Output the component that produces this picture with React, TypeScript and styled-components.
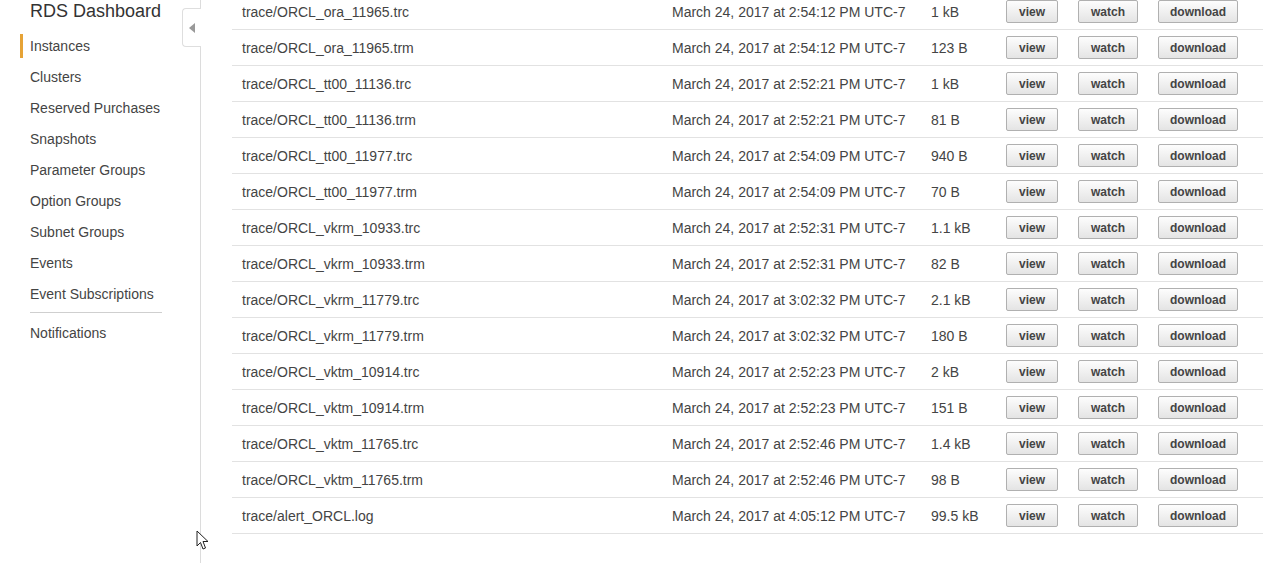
import styled, { createGlobalStyle } from "styled-components"

type LogFile = {
  name: string
  date: string
  size: string
}

const files: LogFile[] = [
  { name: "trace/ORCL_ora_11965.trc", date: "March 24, 2017 at 2:54:12 PM UTC-7", size: "1 kB" },
  { name: "trace/ORCL_ora_11965.trm", date: "March 24, 2017 at 2:54:12 PM UTC-7", size: "123 B" },
  { name: "trace/ORCL_tt00_11136.trc", date: "March 24, 2017 at 2:52:21 PM UTC-7", size: "1 kB" },
  { name: "trace/ORCL_tt00_11136.trm", date: "March 24, 2017 at 2:52:21 PM UTC-7", size: "81 B" },
  { name: "trace/ORCL_tt00_11977.trc", date: "March 24, 2017 at 2:54:09 PM UTC-7", size: "940 B" },
  { name: "trace/ORCL_tt00_11977.trm", date: "March 24, 2017 at 2:54:09 PM UTC-7", size: "70 B" },
  { name: "trace/ORCL_vkrm_10933.trc", date: "March 24, 2017 at 2:52:31 PM UTC-7", size: "1.1 kB" },
  { name: "trace/ORCL_vkrm_10933.trm", date: "March 24, 2017 at 2:52:31 PM UTC-7", size: "82 B" },
  { name: "trace/ORCL_vkrm_11779.trc", date: "March 24, 2017 at 3:02:32 PM UTC-7", size: "2.1 kB" },
  { name: "trace/ORCL_vkrm_11779.trm", date: "March 24, 2017 at 3:02:32 PM UTC-7", size: "180 B" },
  { name: "trace/ORCL_vktm_10914.trc", date: "March 24, 2017 at 2:52:23 PM UTC-7", size: "2 kB" },
  { name: "trace/ORCL_vktm_10914.trm", date: "March 24, 2017 at 2:52:23 PM UTC-7", size: "151 B" },
  { name: "trace/ORCL_vktm_11765.trc", date: "March 24, 2017 at 2:52:46 PM UTC-7", size: "1.4 kB" },
  { name: "trace/ORCL_vktm_11765.trm", date: "March 24, 2017 at 2:52:46 PM UTC-7", size: "98 B" },
  { name: "trace/alert_ORCL.log", date: "March 24, 2017 at 4:05:12 PM UTC-7", size: "99.5 kB" },
]

const navItems = [
  "Instances",
  "Clusters",
  "Reserved Purchases",
  "Snapshots",
  "Parameter Groups",
  "Option Groups",
  "Subnet Groups",
  "Events",
  "Event Subscriptions",
]

const GlobalStyle = createGlobalStyle`
  body {
    margin: 0;
    background: #fff;
    font-family: "Liberation Sans", Arial, sans-serif;
    overflow: hidden;
  }
`

export default function App() {
  return (
    <>
      <GlobalStyle />
      <Page>
        <Sidebar>
          <Title>RDS Dashboard</Title>
          <Nav>
            {navItems.map((label, i) => (
              <NavItem key={label} $active={i === 0}>
                {label}
              </NavItem>
            ))}
            <Divider />
            <NavItem $active={false}>Notifications</NavItem>
          </Nav>
          <CollapseTab>
            <svg width="6" height="10" viewBox="0 0 6 10">
              <polygon points="6,0 6,10 0,5" fill="#999" />
            </svg>
          </CollapseTab>
          <Cursor width="14" height="21" viewBox="0 0 14 21">
            <path
              d="M1 1 L1 16 L4.5 12.5 L7 19 L9.5 18 L7 11.5 L12 11.5 Z"
              fill="#fff"
              stroke="#222"
              strokeWidth="1"
              strokeLinejoin="round"
            />
          </Cursor>
        </Sidebar>

        <Main>
          <Table>
            {files.map((f) => (
              <Row key={f.name}>
                <Cell>{f.name}</Cell>
                <Cell>{f.date}</Cell>
                <Cell>{f.size}</Cell>
                <Cell>
                  <Button $w={52}>view</Button>
                </Cell>
                <Cell>
                  <Button $w={60}>watch</Button>
                </Cell>
                <Cell>
                  <Button $w={80}>download</Button>
                </Cell>
              </Row>
            ))}
          </Table>
        </Main>
      </Page>
    </>
  )
}

const Page = styled.div`
  display: flex;
  min-height: 100vh;
`

const Sidebar = styled.aside`
  position: relative;
  width: 200px;
  flex-shrink: 0;
  border-right: 1px solid #dcdcdc;
`

const Title = styled.div`
  padding-left: 30px;
  height: 22px;
  line-height: 22px;
  font-size: 18px;
  color: #333;
`

const Nav = styled.nav`
  margin-top: 8px;
  display: flex;
  flex-direction: column;
`

const NavItem = styled.a<{ $active: boolean }>`
  display: flex;
  align-items: center;
  height: 31px;
  margin-left: 20px;
  padding-left: 10px;
  position: relative;
  font-size: 14px;
  color: #444;
  cursor: pointer;

  &::before {
    content: "";
    position: absolute;
    left: 0;
    top: 4px;
    bottom: 3px;
    width: 3px;
    background: ${(p) => (p.$active ? "#e6a336" : "transparent")};
  }
`

const Divider = styled.hr`
  width: 132px;
  margin: 3px 0 4px 30px;
  border: 0;
  border-top: 1px solid #cfcfcf;
`

const CollapseTab = styled.div`
  position: absolute;
  top: 8px;
  right: -1px;
  width: 18px;
  height: 37px;
  display: flex;
  align-items: center;
  justify-content: center;
  background: #fff;
  border: 1px solid #dedede;
  border-right: 0;
  border-radius: 4px 0 0 4px;
`

const Cursor = styled.svg`
  position: absolute;
  left: 196px;
  top: 530px;
`

const Main = styled.main`
  flex: 1;
  padding-left: 31px;
  overflow: hidden;
`

const Table = styled.div`
  margin-top: -6px;
`

const Row = styled.div`
  display: grid;
  grid-template-columns: 430px 259px 75px 72px 80px 1fr;
  align-items: center;
  height: 35px;
  border-bottom: 1px solid #e2e2e2;
`

const Cell = styled.div`
  padding-left: 10px;
  font-size: 14px;
  color: #444;
  white-space: nowrap;
`

const Button = styled.button<{ $w: number }>`
  width: ${(p) => p.$w}px;
  height: 23px;
  padding: 0;
  border: 1px solid #b0b0b0;
  border-radius: 2px;
  background: linear-gradient(#fdfdfd, #e4e4e4);
  font-family: "Liberation Sans", Arial, sans-serif;
  font-size: 12px;
  font-weight: bold;
  color: #444;
  cursor: pointer;
`
